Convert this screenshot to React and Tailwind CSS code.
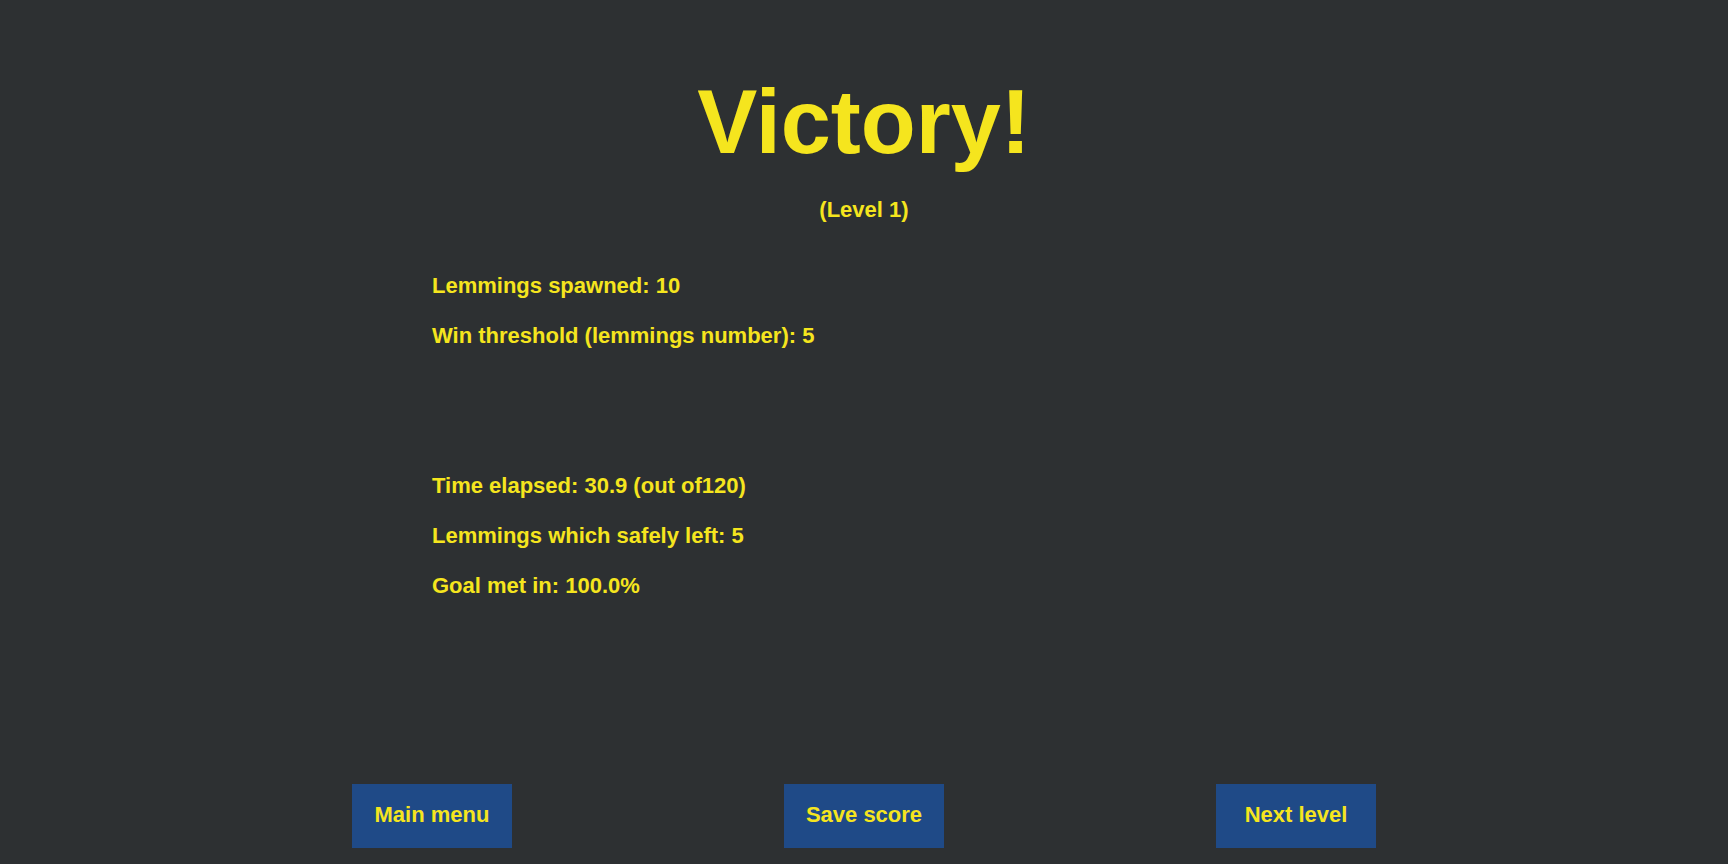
export default function App() {
  const rows = [
    "Lemmings spawned: 10",
    "Win threshold (lemmings number): 5",
    "",
    "",
    "Time elapsed: 30.9 (out of120)",
    "Lemmings which safely left: 5",
    "Goal met in: 100.0%",
  ];
  return (
    <div
      className="h-[864px] w-full bg-[#2d3032] text-[#f5e51e] font-bold flex flex-col pt-[77px] pb-[16px]"
      style={{ fontFamily: '"Liberation Sans", Arial, sans-serif' }}
    >
      <h1 className="text-[90px] leading-[90px] text-center font-bold">Victory!</h1>
      <p className="mt-[18px] text-[22px] leading-[50px] h-[50px] text-center">(Level 1)</p>
      <div className="mt-[26px] w-1/2 mx-auto flex flex-col">
        {rows.map((r, i) => (
          <p key={i} className="text-[22px] leading-[50px] h-[50px]">
            {r}
          </p>
        ))}
      </div>
      <div className="mt-auto w-[1296px] mx-auto grid grid-cols-3">
        {["Main menu", "Save score", "Next level"].map((b) => (
          <button
            key={b}
            className="justify-self-center w-[160px] h-[64px] pb-[3px] bg-[#1f4a87] text-[#f5e51e] text-[22px] font-bold flex items-center justify-center"
            style={{ fontFamily: '"Liberation Sans", Arial, sans-serif' }}
          >
            {b}
          </button>
        ))}
      </div>
    </div>
  );
}
